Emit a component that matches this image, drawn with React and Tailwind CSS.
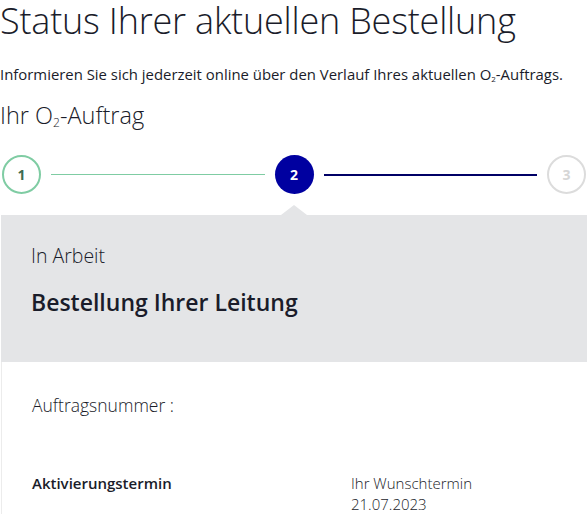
export default function App() {
  return (
    <div className="w-[587px] h-[514px] overflow-hidden bg-white font-['Open_Sans',sans-serif] text-[#1a1c2a]">
      {/* Heading */}
      <h1 className="text-[36px] font-light leading-[42px] tracking-[-0.2px]">Status Ihrer aktuellen Bestellung</h1>
      <p className="mt-[22px] text-[14.9px] leading-[20px]">
        Informieren Sie sich jederzeit online über den Verlauf Ihres aktuellen O<sub className="text-[8px]">2</sub>-Auftrags.
      </p>
      <h2 className="mt-[16px] text-[23.5px] font-light leading-[30px]">
        Ihr O<sub className="text-[12px]">2</sub>-Auftrag
      </h2>

      {/* Stepper */}
      <div className="mt-[25px] flex items-center pl-[2px] pr-[1px]">
        <div className="w-[39px] h-[39px] shrink-0 rounded-full border-2 border-[#7fcca3] flex items-center justify-center text-[14px] font-bold text-[#3d6b52]">1</div>
        <div className="mx-[10px] h-[1px] flex-1 bg-[#7fcca3]" />
        <div className="w-[39px] h-[39px] shrink-0 rounded-full bg-[#0000a0] flex items-center justify-center text-[14px] font-bold text-white">2</div>
        <div className="mx-[10px] h-[2px] flex-1 bg-[#000066]" />
        <div className="w-[39px] h-[39px] shrink-0 rounded-full border-2 border-[#dcdcdc] flex items-center justify-center text-[14px] font-bold text-[#d6d6d6]">3</div>
      </div>

      {/* Card */}
      <div className="relative mt-[21px] ml-[1px]">
        <div className="absolute -top-[10px] left-[280px] w-0 h-0 border-l-[13px] border-r-[13px] border-b-[10px] border-l-transparent border-r-transparent border-b-[#e4e5e7]" />
        <div className="bg-[#e4e5e7] h-[147px] pl-[30px] pt-[28px]">
          <div className="text-[19.5px] font-light leading-[26px]">In Arbeit</div>
          <div className="mt-[18px] text-[23px] font-semibold leading-[30px]">Bestellung Ihrer Leitung</div>
        </div>
        <div className="border-l border-[#ececec] pl-[30px] pt-[31px] h-[200px]">
          <div className="text-[17.5px] font-light leading-[24px]">Auftragsnummer :</div>
          <div className="mt-[56px] flex text-[15px] leading-[21px]">
            <div className="w-[319px] font-semibold">Aktivierungstermin</div>
            <div className="font-light">
              <div>Ihr Wunschtermin</div>
              <div>21.07.2023</div>
            </div>
          </div>
        </div>
      </div>
    </div>
  );
}
